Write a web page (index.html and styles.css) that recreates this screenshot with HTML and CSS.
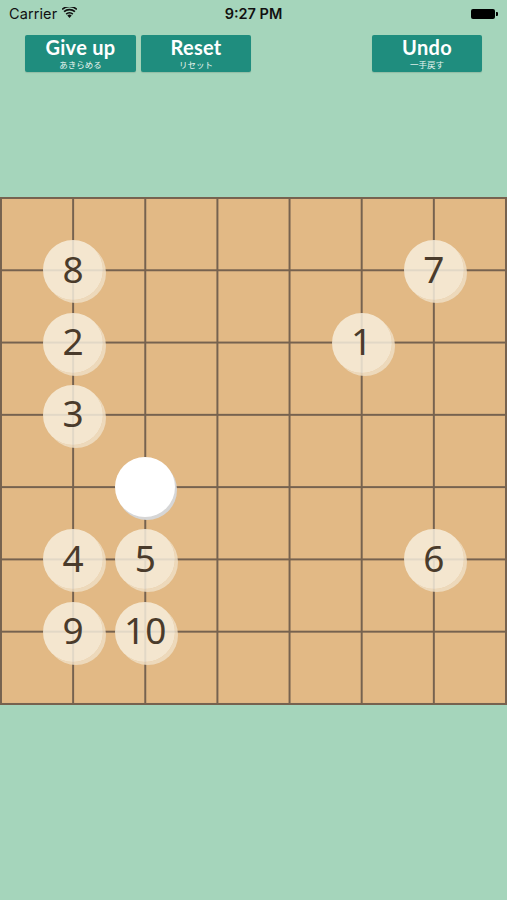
FILE: index.html
```html
<!DOCTYPE html>
<html>
<head>
<meta charset="utf-8">
<link rel="stylesheet" href="styles.css">
</head>
<body>
<div class="screen">
  <div class="status">
    <div class="carrier">Carrier
      <svg class="wifi" width="15" height="11" viewBox="0 0 15 11">
        <path d="M7.5 11 L5.3 8.4 A3.3 3.3 0 0 1 9.7 8.4 Z" fill="#111"/>
        <path d="M3.6 6.5 A5.8 5.8 0 0 1 11.4 6.5 L10.3 7.7 A4.3 4.3 0 0 0 4.7 7.7 Z" fill="#111"/>
        <path d="M1.5 4.1 A9 9 0 0 1 13.5 4.1 L12.4 5.3 A7.4 7.4 0 0 0 2.6 5.3 Z" fill="#111"/>
        <path d="M-0.4 1.8 A11.8 11.8 0 0 1 15.4 1.8 L14.4 3 A10.3 10.3 0 0 0 0.6 3 Z" fill="#111"/>
      </svg>
    </div>
    <div class="time">9:27 PM</div>
    <div class="battery"><span class="cell"></span><span class="nub"></span></div>
  </div>
  <div class="toolbar">
    <div class="btn"><span class="main">Give up</span><span class="sub">あきらめる</span></div>
    <div class="btn"><span class="main">Reset</span><span class="sub">リセット</span></div>
    <div class="btn undo"><span class="main">Undo</span><span class="sub">一手戻す</span></div>
  </div>
  <div class="board">
    <div class="stone" style="grid-column:2;grid-row:2">8</div>
    <div class="stone" style="grid-column:7;grid-row:2">7</div>
    <div class="stone" style="grid-column:2;grid-row:3">2</div>
    <div class="stone" style="grid-column:6;grid-row:3">1</div>
    <div class="stone" style="grid-column:2;grid-row:4">3</div>
    <div class="stone white" style="grid-column:3;grid-row:5"></div>
    <div class="stone" style="grid-column:2;grid-row:6">4</div>
    <div class="stone" style="grid-column:3;grid-row:6">5</div>
    <div class="stone" style="grid-column:7;grid-row:6">6</div>
    <div class="stone" style="grid-column:2;grid-row:7">9</div>
    <div class="stone" style="grid-column:3;grid-row:7">10</div>
  </div>
</div>
</body>
</html>
```
FILE: styles.css
```css
html, body {
  margin: 0;
  padding: 0;
  background: #a5d5bb;
}
.screen {
  width: 507px;
  height: 900px;
  background: #a5d5bb;
  overflow: hidden;
}
.status {
  height: 27px;
  display: flex;
  align-items: center;
  justify-content: space-between;
  padding: 0 9px 0 9px;
  position: relative;
  font-family: "Inter", "Liberation Sans", sans-serif;
  color: #111;
  font-size: 14.5px;
}
.carrier {
  display: flex;
  align-items: center;
  gap: 5px;
  letter-spacing: 0.1px;
}
.wifi { margin-top: -2px; }
.time {
  position: absolute;
  left: 0;
  right: 0;
  text-align: center;
  font-weight: 600;
  font-size: 14.5px;
}
.battery {
  display: flex;
  align-items: center;
}
.battery .cell {
  width: 24px;
  height: 10px;
  background: #000;
  border-radius: 2px;
}
.battery .nub {
  width: 2px;
  height: 4px;
  background: #000;
  border-radius: 0 1px 1px 0;
  margin-left: 1px;
}
.toolbar {
  display: flex;
  padding: 8px 25px 0 25px;
  gap: 5px;
  height: 37px;
}
.btn {
  width: 111px;
  height: 37px;
  background: #1f8d7e;
  border-radius: 2px;
  box-shadow: 0 1px 1px rgba(0,0,0,0.12);
  display: flex;
  flex-direction: column;
  align-items: center;
  color: #fff;
}
.btn + .btn { width: 110px; }
.btn.undo { margin-left: auto; }
.btn .main {
  display: block;
  font-family: "Lato", "Noto Sans", sans-serif;
  font-weight: 700;
  font-size: 20px;
  line-height: 20px;
  margin-top: 2px;
  letter-spacing: 0.3px;
}
.btn .sub {
  display: block;
  font-family: "Noto Sans CJK JP", sans-serif;
  font-size: 8.5px;
  line-height: 10px;
  margin-top: 2px;
  color: #e8f4ef;
}
.board {
  margin-top: 125px;
  width: 507px;
  height: 508px;
  box-sizing: border-box;
  border-right: 2px solid #76624f;
  border-bottom: 2px solid #76624f;
  background-color: #e2b985;
  background-image:
    linear-gradient(to right, #76624f 0, #76624f 2px, transparent 2px),
    linear-gradient(to bottom, #76624f 0, #76624f 2px, transparent 2px);
  background-size: calc(100% / 7) 100%, 100% calc(100% / 7);
  display: grid;
  grid-template-columns: repeat(7, 1fr);
  grid-template-rows: repeat(7, 1fr);
}
.stone {
  width: 60px;
  height: 60px;
  box-sizing: border-box;
  padding-bottom: 4px;
  margin: -29px 0 0 -29px;
  border-radius: 50%;
  background: rgba(247, 238, 222, 0.84);
  box-shadow: 3px 3px 0 rgba(238, 222, 196, 0.85);
  display: flex;
  align-items: center;
  justify-content: center;
  font-family: "Noto Sans", sans-serif;
  font-size: 37px;
  color: #4a3b2b;
  line-height: 1;
  align-self: start;
  justify-self: start;
}
.stone.white {
  background: #ffffff;
  box-shadow: 2px 3px 0 #d6d6d6;
}
```
